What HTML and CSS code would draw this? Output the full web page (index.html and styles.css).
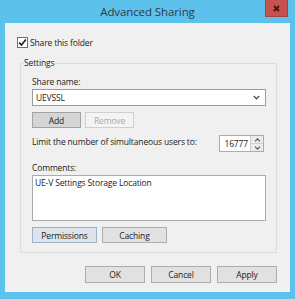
FILE: index.html
```html
<!DOCTYPE html>
<html>
<head>
<meta charset="utf-8">
<link rel="stylesheet" href="styles.css">
</head>
<body>
<div class="window">
  <div class="titlebar">
    <span class="spacer"></span>
    <span class="title">Advanced Sharing</span>
    <span class="close"><svg width="7" height="7" viewBox="0 0 7 7"><path d="M1 1L6 6M6 1L1 6" stroke="#3a1a1a" stroke-width="1.8" fill="none"/></svg></span>
  </div>
  <div class="client">
    <label class="check-row">
      <span class="checkbox"><svg width="9" height="9" viewBox="0 0 9 9"><path d="M1.2 4.6L3.5 7L7.9 1.5" stroke="#1a1a1a" stroke-width="1.6" fill="none"/></svg></span>
      <span>Share this folder</span>
    </label>
    <div class="group">
      <span class="group-title">Settings</span>
      <div class="label share-label">Share name:</div>
      <div class="combo">
        <span class="combo-text">UEVSSL</span>
        <svg class="chev" width="7" height="5" viewBox="0 0 7 5"><path d="M0.8 1L3.5 3.8L6.2 1" stroke="#444" stroke-width="1.2" fill="none"/></svg>
      </div>
      <div class="btn-row narrow">
        <span class="btn btn-hot">Add</span>
        <span class="btn btn-disabled">Remove</span>
      </div>
      <div class="limit-row">
        <span class="label">Limit the number of simultaneous users to:</span>
        <div class="spinner">
          <span class="spin-value">16777</span>
          <span class="spin-arrows">
            <span class="arrow"><svg width="7" height="4" viewBox="0 0 7 4"><path d="M1 3.3L3.5 0.8L6 3.3" stroke="#555" stroke-width="1.1" fill="none"/></svg></span>
            <span class="arrow"><svg width="7" height="4" viewBox="0 0 7 4"><path d="M1 0.7L3.5 3.2L6 0.7" stroke="#555" stroke-width="1.1" fill="none"/></svg></span>
          </span>
        </div>
      </div>
      <div class="label comments-label">Comments:</div>
      <div class="textarea">UE-V Settings Storage Location</div>
      <div class="btn-row wide">
        <span class="btn btn-focus">Permissions</span>
        <span class="btn">Caching</span>
      </div>
    </div>
    <div class="footer">
      <span class="btn btn-foot">OK</span>
      <span class="btn btn-foot">Cancel</span>
      <span class="btn btn-foot">Apply</span>
    </div>
  </div>
</div>
</body>
</html>
```
FILE: styles.css
```css
html, body {
  margin: 0;
  padding: 0;
}
body {
  width: 295px;
  height: 299px;
  overflow: hidden;
  font-family: "Open Sans", "Noto Sans", sans-serif;
  font-size: 8.5px;
  letter-spacing: -0.15px;
  color: #1c1c1c;
}
.window {
  width: 295px;
  height: 299px;
  background: #5cc2eb;
  display: flex;
  flex-direction: column;
}
.titlebar {
  height: 23px;
  display: grid;
  grid-template-columns: 1fr auto 1fr;
  align-items: start;
}
.title {
  font-size: 11.5px;
  letter-spacing: -0.1px;
  line-height: 24px;
  color: #2a3a48;
}
.close {
  justify-self: end;
  margin-right: 7px;
  width: 23px;
  height: 17px;
  box-sizing: border-box;
  background: #c8504e;
  border: 1px solid #a8413f;
  border-top: none;
  display: flex;
  align-items: center;
  justify-content: center;
}
.client {
  margin: 0 5px;
  height: 269px;
  background: #f0f0f0;
  display: flex;
  flex-direction: column;
}
.check-row {
  margin: 14px 0 0 12px;
  height: 11px;
  display: flex;
  align-items: center;
  gap: 2px;
  line-height: 11px;
}
.checkbox {
  width: 11px;
  height: 11px;
  box-sizing: border-box;
  border: 1px solid #6e6e6e;
  background: #fff;
  display: flex;
  align-items: center;
  justify-content: center;
}
.group {
  margin: 15px 0 0 15px;
  width: 257px;
  box-sizing: border-box;
  border: 1px solid #dcdcdc;
  padding: 0 10px 9px 11px;
  display: flex;
  flex-direction: column;
}
.group-title {
  align-self: flex-start;
  margin: -7px 0 0 -9px;
  padding: 0 1px;
  background: #f0f0f0;
  line-height: 12px;
}
.label {
  line-height: 12px;
}
.share-label {
  margin-top: 7px;
}
.combo {
  margin-top: 1px;
  height: 17px;
  box-sizing: border-box;
  border: 1px solid #9c9c9c;
  background: #fff;
  display: flex;
  align-items: center;
  justify-content: space-between;
  padding: 0 5px 0 3px;
}
.btn-row {
  display: flex;
  height: 16px;
}
.btn-row.narrow {
  margin-top: 6px;
  gap: 4px;
}
.btn-row.narrow .btn {
  width: 49px;
}
.btn-row.wide {
  margin-top: 6px;
  gap: 5px;
}
.btn-row.wide .btn {
  width: 65px;
}
.btn {
  box-sizing: border-box;
  height: 16px;
  border: 1px solid #adadad;
  background: #e1e1e1;
  display: flex;
  align-items: center;
  justify-content: center;
  color: #1c1c1c;
}
.btn-hot {
  background: #d5d5d5;
  border-color: #a3a3a3;
}
.btn-disabled {
  background: #f4f4f4;
  border-color: #cfcfcf;
  color: #a8a8a8;
}
.btn-focus {
  background: #dde3ea;
  border-color: #9eb3c9;
}
.limit-row {
  margin-top: 7px;
  display: flex;
  align-items: center;
  justify-content: space-between;
  padding-right: 2px;
}
.limit-row .label {
  margin-top: -3px;
}
.spinner {
  display: flex;
  height: 17px;
  width: 45px;
  box-sizing: border-box;
  border: 1px solid #acacac;
  background: #fff;
}
.spin-value {
  flex: 1;
  text-align: right;
  line-height: 15px;
  padding-right: 2px;
}
.spin-arrows {
  width: 12px;
  display: flex;
  flex-direction: column;
  border-left: 1px solid #c9c9c9;
}
.arrow {
  flex: 1;
  display: flex;
  align-items: center;
  justify-content: center;
  background: #ececec;
}
.arrow + .arrow {
  border-top: 1px solid #d0d0d0;
}
.comments-label {
  margin-top: 10px;
}
.textarea {
  margin-top: 1px;
  height: 46px;
  box-sizing: border-box;
  border: 1px solid #acacac;
  background: #fff;
  padding: 1px 2px;
  line-height: 12px;
}
.footer {
  margin: 13px 13px 0 0;
  display: flex;
  justify-content: flex-end;
  gap: 6px;
}
.btn-foot {
  width: 60px;
  height: 17px;
}
```
